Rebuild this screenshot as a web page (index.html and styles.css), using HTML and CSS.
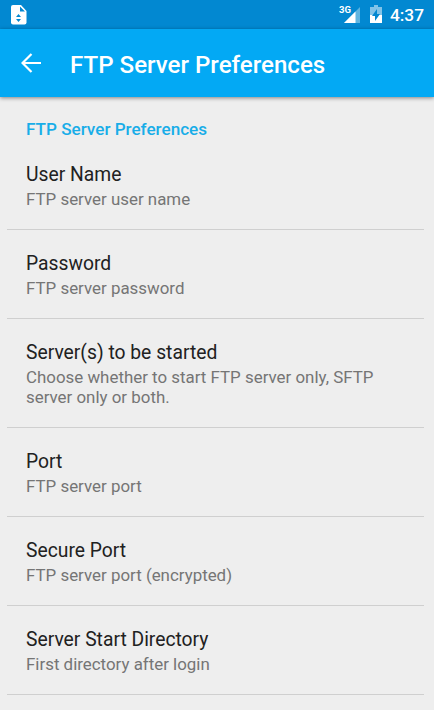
FILE: index.html
```html
<!DOCTYPE html>
<html lang="en">
<head>
  <meta charset="UTF-8" />
  <meta name="viewport" content="width=device-width, initial-scale=1.0"/>
  <title>FTP Server Preferences</title>
  <link rel="stylesheet" href="styles.css">
</head>
<body>

  <div class="status-bar">
    <svg class="file-icon" width="16" height="20" viewBox="0 0 16 20">
      <path fill="#fff" d="M2 0h8l5.500 6v11.500a2 2 0 0 1-2 2H2a2 2 0 0 1-2-2V2a2 2 0 0 1 2-2z"/>
      <path fill="#0288d1" d="M9 1.500v5h5zM7.500 9l2.500 3H5zM7.500 17l2.500-3H5z"/>
    </svg>
    <div class="status-right">
      <svg class="signal-icon" width="22" height="20" viewBox="0 0 22 20">
        <path fill="#5fb4e0" d="M21 3v16H5z"/>
        <path fill="#fff" d="M16.500 7.500V19H5z"/>
        <text x="0" y="9" class="network">3G</text>
      </svg>
      <svg class="battery-icon" width="12" height="18" viewBox="0 0 12 18">
        <path fill="#81c3e8" d="M4 0h4v2h4v8H0V2h4z"/>
        <path fill="#fff" d="M0 10h12v8H0z"/>
        <path fill="#0288d1" d="M7 4v5h3l-5 7v-5H2z"/>
      </svg>
      <span class="clock">4:37</span>
    </div>
  </div>

  <header class="toolbar">
    <svg class="back-icon" width="20" height="20" viewBox="0 0 20 20">
      <path fill="none" stroke="#fff" stroke-width="2.2" d="M20 10H2M10.500 1L1.500 10l9 9"/>
    </svg>
    <h1>FTP Server Preferences</h1>
  </header>

  <main class="preferences">
    <h2>FTP Server Preferences</h2>
    <div class="preference">
      <h3>User Name</h3>
      <p>FTP server user name</p>
    </div>
    <div class="preference">
      <h3>Password</h3>
      <p>FTP server password</p>
    </div>
    <div class="preference">
      <h3>Server(s) to be started</h3>
      <p>Choose whether to start FTP server only, SFTP server only or both.</p>
    </div>
    <div class="preference">
      <h3>Port</h3>
      <p>FTP server port</p>
    </div>
    <div class="preference">
      <h3>Secure Port</h3>
      <p>FTP server port (encrypted)</p>
    </div>
    <div class="preference">
      <h3>Server Start Directory</h3>
      <p>First directory after login</p>
    </div>
  </main>

</body>
</html>
```
FILE: styles.css
```css
body {
  font-family: Roboto, sans-serif;
  background: #eeeeee;
  margin: 0;
  height: 710px;
  overflow: hidden;
}

h1, h2, h3, p {
  margin: 0;
}

.status-bar {
  display: flex;
  align-items: center;
  justify-content: space-between;
  box-sizing: border-box;
  height: 29px;
  padding: 0 10px 0 11px;
  background: #0288d1;
  color: #ffffff;
}

.status-right {
  display: flex;
  align-items: center;
}

.network {
  font-size: 9.5px;
  font-weight: bold;
  fill: #ffffff;
}

.signal-icon {
  margin-bottom: 1px;
}

.battery-icon {
  margin: 0 8px 1px 9px;
}

.clock {
  font-size: 17.3px;
  line-height: 20px;
  font-weight: 500;
}

.toolbar {
  display: flex;
  align-items: center;
  height: 68px;
  padding-left: 21px;
  background: #03a9f4;
  box-shadow: 0 1px 4px rgba(0, 0, 0, 0.45);
}

.toolbar h1 {
  margin: 3px 0 0 29px;
  font-size: 24.1px;
  font-weight: 500;
  color: #ffffff;
}

.preferences {
  padding: 22px 10px 0 7px;
}

.preferences h2 {
  padding-left: 19px;
  font-size: 17.1px;
  line-height: 20px;
  font-weight: 500;
  color: #18ade8;
}

.preference {
  padding: 22px 19px 20px;
  border-bottom: 1px solid #cfcfcf;
}

.preferences h2 + .preference {
  padding-top: 24px;
}

.preference h3 {
  margin-bottom: 2px;
  font-size: 19.3px;
  line-height: 24px;
  font-weight: 400;
  color: #212121;
}

.preference p {
  font-size: 16.9px;
  line-height: 20px;
  color: #757575;
}
```
